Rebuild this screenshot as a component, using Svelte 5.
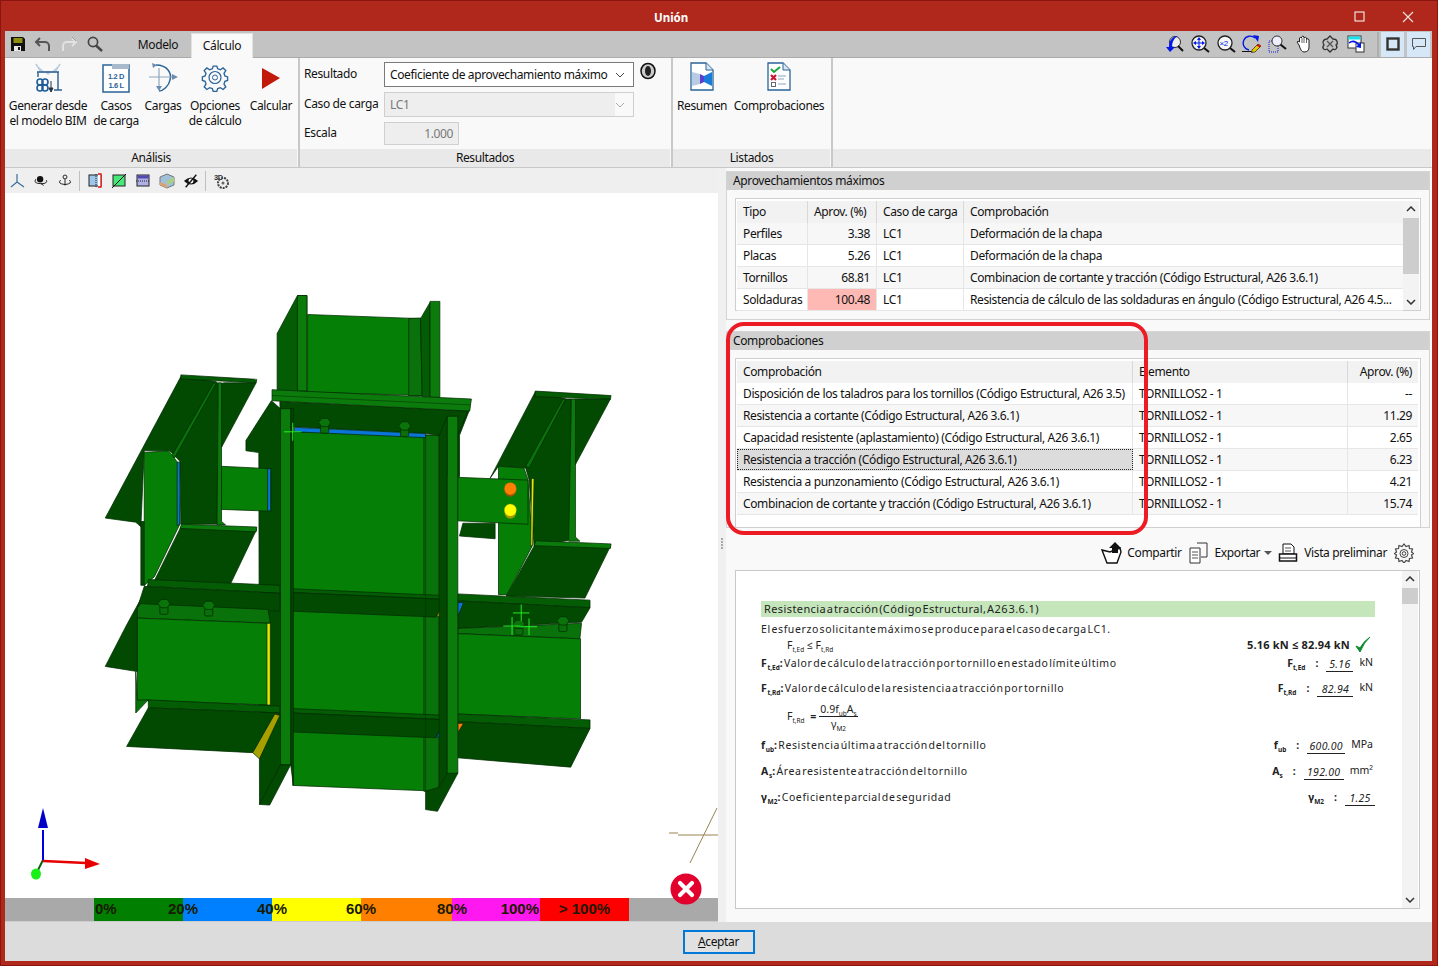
<script>
  const maxRows = [
    ['Perfiles', '3.38', 'LC1', 'Deformación de la chapa'],
    ['Placas', '5.26', 'LC1', 'Deformación de la chapa'],
    ['Tornillos', '68.81', 'LC1', 'Combinacion de cortante y tracción (Código Estructural, A26 3.6.1)'],
    ['Soldaduras', '100.48', 'LC1', 'Resistencia de cálculo de las soldaduras en ángulo (Código Estructural, A26 4.5...']
  ]
  const checkRows = [
    ['Disposición de los taladros para los tornillos (Código Estructural, A26 3.5)', '--'],
    ['Resistencia a cortante (Código Estructural, A26 3.6.1)', '11.29'],
    ['Capacidad resistente (aplastamiento) (Código Estructural, A26 3.6.1)', '2.65'],
    ['Resistencia a tracción (Código Estructural, A26 3.6.1)', '6.23'],
    ['Resistencia a punzonamiento (Código Estructural, A26 3.6.1)', '4.21'],
    ['Combinacion de cortante y tracción (Código Estructural, A26 3.6.1)', '15.74']
  ]
  const legend = [
    { c: '#007f00', w: 89, t: '0%', left: true, end: '20%' },
    { c: '#0080ff', w: 89, end: '40%' },
    { c: '#ffff00', w: 89, end: '60%' },
    { c: '#ff8000', w: 91, end: '80%' },
    { c: '#ff18f0', w: 88, t: '100%', right: true },
    { c: '#ff0000', w: 89, t: '> 100%', center: true }
  ]

  const G = '#067f06', D = '#024a02', M = '#0a720a', L = '#0b7c0b', S = '#045c04'
  // piezas del modelo, de atrás hacia delante (coordenadas del recorte)
  const faces = [
    // pilar superior
    [S, '552,155 612,45 640,45 640,325 552,325'],
    [L, '612,45 640,45 640,322 612,322'],
    [G, '642,100 975,112 985,335 642,325'],
    [M, '940,112 975,110 980,335 940,335'],
    [S, '975,112 1003,65 1003,338 980,338'],
    [L, '1003,62 1032,62 1032,340 1003,340'],
    // viga superior izquierda
    [D, '268,280 372,295 378,300 375,708 268,708 265,525 235,495 160,495 150,715 135,702 45,690'],
    [D, '150,700 162,700 162,885 150,885'],
    [S, '268,275 492,288 490,298 268,287'],
    [D, '395,298 490,298 388,485 388,300'],
    [L, '378,298 388,298 388,700 400,710 375,710'],
    [M, '240,512 365,298 373,298 250,515'],
    [G, '160,500 232,495 258,528 265,708 190,860 160,885'],
    ['#0a74d8', '257,528 265,528 265,708 257,712'],
    [D, '270,712 492,722 415,880 188,875'],
    [L, '270,708 492,716 490,730 266,720'],
    // viga superior derecha
    [D, '1313,325 1405,345 1285,545 1205,540 1180,575'],
    [D, '1285,545 1405,345 1420,345 1420,745 1410,755 1310,770 1295,578'],
    [M, '1285,540 1395,345 1403,345 1295,545'],
    [S, '1313,322 1537,335 1535,346 1313,338'],
    [D, '1440,345 1535,345 1432,535 1432,345'],
    [D, '1100,705 1195,705 1195,750 1090,742'],
    [L, '1420,345 1432,345 1432,745 1445,757 1412,757'],
    [G, '1205,540 1280,545 1292,578 1305,770 1230,912 1205,912'],
    ['#e6e600', '1302,575 1310,575 1306,768 1300,772'],
    [D, '1315,762 1535,772 1460,922 1228,916'],
    [L, '1315,756 1537,765 1535,778 1310,770'],
    // fondo del pilar
    [D, '460,495 460,465 535,350 570,380 570,1400 500,1520 498,500'],
    [D, '1040,385 1120,375 1090,450 1090,570 1040,570'],
    // vigas inferiores
    [D, '172,885 108,1000 45,1120 140,1135 140,950'],
    [S, '172,868 560,885 560,908 170,888'],
    [D, '160,888 560,908 560,960 140,950'],
    [M, '140,950 150,938 525,955 532,995 140,980'],
    [G, '140,980 530,995 530,1232 140,1218'],
    ['#e6e600', '522,995 532,995 532,1232 522,1232'],
    [M, '135,1135 140,1218 172,1217 135,1255'],
    [S, '172,1217 560,1235 560,1255 172,1240'],
    [D, '172,1240 108,1352 480,1370 560,1255'],
    ['#a8a000', '480,1370 500,1388 560,1262 545,1258'],
    [S, '1085,910 1475,928 1475,950 1085,930'],
    [D, '1085,930 1475,950 1450,992 1085,1010'],
    [M, '1085,1010 1450,995 1445,1040 1085,1025'],
    [G, '1085,1025 1447,1040 1447,1272 1085,1258'],
    [S, '1085,1258 1475,1275 1475,1300 1085,1280'],
    [D, '1085,1280 1475,1300 1418,1412 1085,1385'],
    ['#0a74d8', '1085,935 1102,935 1085,975'],
    ['#ff8000', '1085,1285 1102,1285 1085,1312'],
    // alma del pilar
    [G, '598,440 1030,450 1030,1482 598,1465'],
    [M, '985,450 1030,450 1030,1482 985,1482'],
    [D, '560,352 1115,380 1085,450 1030,450 990,445 600,425 562,420'],
    ['#0a74d8', '603,427 990,445 990,457 603,440'],
    [S, '595,895 1052,915 1052,926 595,906'],
    [D, '595,906 1050,926 1020,977 595,960'],
    ['#a8a000', '1022,976 1035,976 1052,928 1045,926'],
    [S, '595,1242 1052,1262 1052,1274 595,1255'],
    [D, '595,1255 1050,1275 1020,1327 595,1310'],
    ['#0a5cb8', '1022,1325 1035,1325 1052,1278 1045,1276'],
    // alas del pilar
    [D, '592,373 600,373 600,1465 592,1405'],
    [D, '1030,450 1054,395 1054,1430 1030,1470'],
    [L, '562,373 592,373 592,1405 562,1405'],
    [L, '1054,395 1085,395 1085,1430 1054,1430'],
    [D, '500,1520 530,1522 592,1405 562,1405'],
    [D, '990,1535 1025,1540 1085,1430 1054,1430 1030,1470 990,1482'],
    // placa superior
    [L, '537,318 1125,345 1120,380 537,350'],
    // chapas de unión
    [G, '388,540 533,547 533,670 388,665'],
    ['#0a74d8', '524,547 533,547 533,670 524,668'],
    [G, '1085,572 1292,580 1292,708 1085,698']
  ]
  const bolts = [[692, 415], [928, 425], [218, 940], [350, 945], [1265, 1000], [1395, 990]]
  const crosses = [[598, 440, 26], [1272, 965, 24], [1245, 1003, 26], [1295, 1005, 24]]
</script>

<div class="window">
  <div class="titlebar">
    <span class="title">Unión</span>
    <svg class="winbtn max" width="12" height="12"><rect x="1" y="1" width="9" height="9" fill="none" stroke="#fff" /></svg>
    <svg class="winbtn close" width="12" height="12"><path d="M1 1 L11 11 M11 1 L1 11" stroke="#f6e0dc" stroke-width="1.2" /></svg>
  </div>

  <div class="tabbar">
    <div class="quick">
      <svg width="16" height="16" viewBox="0 0 16 16"><path d="M1 1h12l2 2v12H1z" fill="#111" /><rect x="3.5" y="2" width="9" height="5" fill="#8e8e10" /><rect x="4" y="10" width="7" height="5" fill="#e8e8e8" /><rect x="8" y="11" width="2" height="3" fill="#111" /></svg>
      <svg width="18" height="16" viewBox="0 0 18 16"><path d="M6 2 L2 6 L6 10 M2 6 H11 A4 4 0 0 1 15 10 V15" fill="none" stroke="#555" stroke-width="2" /></svg>
      <svg width="18" height="16" viewBox="0 0 18 16"><path d="M12 2 L16 6 L12 10 M16 6 H7 A4 4 0 0 0 3 10 V15" fill="none" stroke="#e2e2e2" stroke-width="2" /><path d="M12 1 L16 5" stroke="#999" /></svg>
      <svg width="18" height="16" viewBox="0 0 18 16"><circle cx="7" cy="6" r="4.6" fill="none" stroke="#444" stroke-width="1.7" /><path d="M10 9.5 L16 15" stroke="#444" stroke-width="2.4" /></svg>
    </div>
    <span class="tab">Modelo</span>
    <span class="tab active">Cálculo</span>
    <div class="viewtools">
      <svg width="20" height="18" viewBox="0 0 20 18"><circle cx="11" cy="7" r="5.5" fill="#eee" stroke="#333" /><path d="M14 11 L19 16" stroke="#111" stroke-width="2" /><path d="M6 17 L2 12 H5 C5 5 9 1 14 1 C10 3 8 7 8 12 H11Z" fill="#0018e8" /></svg>
      <svg width="20" height="18" viewBox="0 0 20 18"><circle cx="9" cy="8" r="7" fill="#f2f2f2" stroke="#222" stroke-width="1.3" /><path d="M14 13 L19 17" stroke="#111" stroke-width="2" /><path d="M9 2 L11 5 H7Z M9 14 L11 11 H7Z M3 8 L6 6 V10Z M15 8 L12 6 V10Z" fill="#0018e8" /><path d="M5 8H13M9 4V12" stroke="#0018e8" /></svg>
      <svg width="20" height="18" viewBox="0 0 20 18"><circle cx="9" cy="8" r="7" fill="#f6f6f6" stroke="#222" stroke-width="1.3" /><path d="M14 13 L19 17" stroke="#111" stroke-width="2" /><text x="3.5" y="11" class="x2">×2</text></svg>
      <svg width="20" height="18" viewBox="0 0 20 18"><path d="M13 3 A7 7 0 1 0 7 15" fill="none" stroke="#0018e8" stroke-width="1.4" /><path d="M11 0 L17 1 L16 7Z" fill="#0018e8" /><path d="M0 16.5 H10" stroke="#111" /><path d="M10 15 L16 9 L19 11 L13 17 L9.5 17.5Z" fill="#e6c800" stroke="#222" stroke-width=".7" /><path d="M16 9 L19 11 L17.5 12.5 L14.6 10.4Z" fill="#d01010" /></svg>
      <svg width="20" height="18" viewBox="0 0 20 18"><rect x="1" y="6" width="9" height="11" fill="none" stroke="#1a1ae0" stroke-dasharray="1 1" /><circle cx="9" cy="6" r="5" fill="#eef" stroke="#333" /><path d="M12.5 9.5 L18 14" stroke="#111" stroke-width="2" /></svg>
      <svg width="20" height="18" viewBox="-1 0 20 18"><path d="M4 10 L2 7 Q3 5.5 4.5 7 V3 Q6 1.5 6.5 3 V2 Q8 0 9 2 V2.5 Q11 1.5 11.5 3 V4 Q13.5 3 14 5 V12 Q14 17 9 17 Q6 17 4 10Z" fill="#fff" stroke="#222" /><path d="M7 3V8M9 2V8M11.5 4V8" stroke="#222" stroke-width=".7" /></svg>
      <svg width="20" height="18" viewBox="-1 0 20 18"><path d="M9 1 L12 4 C17 4 17 9 15 10 C17 12 15 16 12 14 L9 17 L6 14 C2 16 1 12 3 10 C1 8 2 4 6 4Z" fill="none" stroke="#333" stroke-width="1.3" /><path d="M6 6 L12 12 M12 6 L6 12" stroke="#555" stroke-width="1.3" /></svg>
      <svg width="20" height="18" viewBox="-1 0 20 18"><rect x="1" y="1" width="13" height="12" fill="#fff" stroke="#333" /><rect x="1.5" y="1.5" width="12" height="3" fill="#16e4ea" /><rect x="9" y="8" width="8" height="9" fill="#fff" stroke="#333" /><path d="M2 8 Q7 4 12 10" fill="none" stroke="#0018e8" stroke-width="1.6" /><path d="M14 7 L14 13 L9 12Z" fill="#0018e8" /></svg>
      <i class="vsep"></i>
      <span class="toggle"><svg width="14" height="14"><rect x="1.5" y="1.5" width="11" height="11" fill="none" stroke="#333" stroke-width="2.4" /></svg></span>
      <span class="toggle"><svg width="16" height="14"><path d="M1.5 1.5 H14.5 V9.5 H5 L2.5 12.5 V9.5 H1.5Z" fill="none" stroke="#555" /></svg></span>
    </div>
  </div>

  <div class="ribbon">
    <section class="group analysis">
      <div class="gbody">
        <div class="rbtn" style="width:82px">
          <svg width="32" height="32" viewBox="0 0 32 32"><path d="M4 2 L9 10 H23 L28 2" fill="none" stroke="#b9c9de" stroke-width="1.5" /><path d="M7 5 L16 13 L25 5 L25 10 H7Z" fill="#bccce2" /><path d="M5 10 H27 M26 10 V28 M22 28 H30 M6 10 V15" stroke="#2c5f92" stroke-width="1.4" fill="none" /><circle cx="8" cy="20" r="3" fill="none" stroke="#1f5c9b" stroke-width="1.6" /><circle cx="13" cy="20" r="3" fill="none" stroke="#1f5c9b" stroke-width="1.6" /><circle cx="8" cy="26" r="3" fill="none" stroke="#1f5c9b" stroke-width="1.6" /><circle cx="13" cy="26" r="3" fill="none" stroke="#1f5c9b" stroke-width="1.6" /><path d="M19 19 V28 M17 26 L19 30 L21 26Z" stroke="#234" fill="#234" /></svg>
          <span>Generar desde<br />el modelo BIM</span>
        </div>
        <div class="rbtn" style="width:54px">
          <svg width="30" height="32" viewBox="0 0 30 32"><path d="M2 3 H28 V30 H2Z" fill="#fff" stroke="#2a6499" stroke-width="1.5" /><path d="M11 2 H28 V7 H11Z" fill="#a9b9cc" /><text x="15" y="17" class="lc">1.2 D</text><text x="15" y="26" class="lc">1.6 L</text></svg>
          <span>Casos<br />de carga</span>
        </div>
        <div class="rbtn" style="width:40px">
          <svg width="30" height="32" viewBox="0 0 30 32"><path d="M8 3 C20 3 24 12 22 18 C21 24 15 29 11 29" fill="none" stroke="#2a6499" stroke-width="1.5" /><path d="M1 15 H24 M11 6 V26" stroke="#8fa5bf" stroke-width="1.2" /><path d="M24 12 L30 15 L24 18Z M8 24 L11 29 L14 24Z M4 1 L9 3 L5 6Z" fill="#6b8cb0" /></svg>
          <span>Cargas</span>
        </div>
        <div class="rbtn" style="width:64px">
          <svg width="30" height="32" viewBox="0 0 30 32"><path d="M13 4 h4 l1 3 3 1 3-2 3 3-2 3 1 3 3 1 v4 l-3 1-1 3 2 3-3 3-3-2-3 1-1 3 h-4 l-1-3-3-1-3 2-3-3 2-3-1-3-3-1 v-4 l3-1 1-3-2-3 3-3 3 2 3-1z" transform="translate(1.5,0.5) scale(.9)" fill="none" stroke="#2a6499" stroke-width="1.5" /><circle cx="15" cy="15.5" r="6" fill="none" stroke="#2a6499" stroke-width="1.2" /><circle cx="15" cy="15.5" r="2.5" fill="none" stroke="#2a6499" /></svg>
          <span>Opciones<br />de cálculo</span>
        </div>
        <div class="rbtn" style="width:48px">
          <svg width="20" height="32" viewBox="0 0 20 32"><path d="M1 6 L19 16 L1 27Z" fill="#c1190a" /></svg>
          <span>Calcular</span>
        </div>
      </div>
      <div class="glabel">Análisis</div>
    </section>

    <section class="group results">
      <div class="gbody form">
        <label class="f1">Resultado</label>
        <div class="combo">Coeficiente de aprovechamiento máximo<svg width="10" height="6"><path d="M1 1 L5 5 L9 1" fill="none" stroke="#444" /></svg></div>
        <svg class="info" width="16" height="18" viewBox="0 0 16 18"><ellipse cx="8" cy="9" rx="7" ry="7.6" fill="#ccc" stroke="#111" stroke-width="1.5" /><ellipse cx="8" cy="9" rx="3" ry="5" fill="#222" /></svg>
        <label class="f2">Caso de carga</label>
        <div class="combo off"><b>LC1</b><svg width="10" height="6"><path d="M1 1 L5 5 L9 1" fill="none" stroke="#aaa" /></svg></div>
        <label class="f3">Escala</label>
        <div class="scale">1.000</div>
      </div>
      <div class="glabel">Resultados</div>
    </section>

    <section class="group lists">
      <div class="gbody">
        <div class="rbtn" style="width:58px">
          <svg width="24" height="30" viewBox="0 0 24 30"><path d="M1 1 H16 L23 8 V28 H1Z" fill="#fff" stroke="#2a6499" stroke-width="1.3" /><path d="M16 1 V8 H23" fill="#dbe6f2" stroke="#2a6499" /><path d="M2 10 L10 12 V22 L2 24Z" fill="#b9cbe2" /><path d="M10 12 L14 14 V20 L10 22Z" fill="#5a3fd0" /><path d="M14 14 L22 10 V24 L14 20Z" fill="#1a7cd8" /></svg>
          <span>Resumen</span>
        </div>
        <div class="rbtn" style="width:96px">
          <svg width="24" height="30" viewBox="0 0 24 30"><path d="M1 1 H16 L23 8 V28 H1Z" fill="#fff" stroke="#2a6499" stroke-width="1.3" /><path d="M16 1 V8 H23" fill="#dbe6f2" stroke="#2a6499" /><path d="M4 7 L7 10 L13 5" fill="none" stroke="#18a838" stroke-width="2" /><path d="M4 13 L9 18 M9 13 L4 18" stroke="#c81830" stroke-width="2.2" /><rect x="4.5" y="20.5" width="4" height="4" fill="none" stroke="#667" /><path d="M11 14H19M11 17H17M11 22H19" stroke="#8fa5bf" /></svg>
          <span>Comprobaciones</span>
        </div>
      </div>
      <div class="glabel">Listados</div>
    </section>

    <section class="group rest">
      <div class="gbody"></div>
      <div class="glabel"></div>
    </section>
  </div>

  <div class="main">
    <div class="left">
      <div class="viewbar">
        <svg width="16" height="16" viewBox="0 0 16 16"><path d="M8 1 V9 L2 14 M8 9 L15 14" fill="none" stroke="#3c6c9a" stroke-width="1.2" /></svg>
        <svg width="16" height="16" viewBox="0 0 18 16"><circle cx="8" cy="6" r="3.6" fill="#111" /><path d="M3 6 Q0 11 9 11 Q17 11 15 7" fill="none" stroke="#111" /><path d="M9 11 L12 13" stroke="#111" /></svg>
        <svg width="16" height="16" viewBox="0 0 18 16"><circle cx="9" cy="3.5" r="2.2" fill="none" stroke="#111" /><path d="M9 6 V13 M4 7 Q0 11 9 12 Q18 11 14 7" fill="none" stroke="#111" /></svg>
        <i class="vsep2"></i>
        <svg width="16" height="16" viewBox="0 0 16 16"><rect x="2" y="2" width="12" height="11" fill="#9fc5e8" stroke="#222" /><path d="M11 1 H14 V14 H11" fill="#fff" stroke="#e01010" stroke-width="1.3" /><path d="M9 1 V15" stroke="#222" stroke-dasharray="1 1" /></svg>
        <svg width="16" height="16" viewBox="0 0 16 16"><rect x="2" y="2" width="12" height="11" fill="#48e878" stroke="#222" /><path d="M1 15 L15 1" stroke="#111" /></svg>
        <svg width="16" height="16" viewBox="0 0 16 16"><rect x="2" y="2" width="12" height="11" fill="#b0b0e8" stroke="#222" /><rect x="2.5" y="2.5" width="11" height="3" fill="#5548b0" /><path d="M1 8 H15" stroke="#222" stroke-dasharray="1 1" /></svg>
        <svg width="16" height="16" viewBox="0 0 16 16"><path d="M8 1 L15 4 V12 L8 15 L1 12 V4Z" fill="#9fc0d8" stroke="#777" /><path d="M8 8 L15 4 V9 L8 12Z" fill="#a8d080" /><path d="M1 9 L8 12 V15 L1 12Z" fill="#e0a070" /></svg>
        <svg width="16" height="16" viewBox="0 0 18 16"><path d="M1 8 Q9 0 17 8 Q9 16 1 8Z" fill="#111" /><circle cx="9" cy="8" r="2.8" fill="#fff" /><path d="M3 15 L15 1" stroke="#111" stroke-width="1.5" /></svg>
        <i class="vsep2"></i>
        <svg width="18" height="18" viewBox="0 0 18 18"><text x="1" y="8" class="td">3D</text><circle cx="10" cy="11" r="5" fill="none" stroke="#444" stroke-width="2" stroke-dasharray="2 1" /><circle cx="10" cy="11" r="1.5" fill="#666" /></svg>
      </div>

      <svg class="scene" viewBox="5 193 713 705" preserveAspectRatio="none">
        <g transform="translate(90,280) scale(0.339,0.345)" stroke="#012c01" stroke-width="2.2" stroke-linejoin="round">
          {#each faces as [fill, points]}
            <polygon {points} {fill} />
          {/each}
          <path d="M537 335 L1122 362 M990 450 V1482 M592 373 V1405" fill="none" stroke="#013001" stroke-width="1.6" />
          {#each bolts as [x, y]}
            <rect x={x - 12} y={y + 5} width="24" height="24" rx="4" fill="#0a6e0a" />
            <polygon points="{x - 18},{y - 2} {x - 8},{y - 14} {x + 10},{y - 14} {x + 18},{y - 2} {x + 10},{y + 10} {x - 8},{y + 10}" fill="#0a740a" />
          {/each}
          <circle cx="1240" cy="611" r="17" fill="#9c5208" stroke="none" />
          <circle cx="1240" cy="605" r="18" fill="#ff8000" stroke="#8a5a00" stroke-width="1" />
          <circle cx="1240" cy="675" r="17" fill="#a09800" stroke="none" />
          <circle cx="1240" cy="667" r="18" fill="#ffff00" stroke="#8a8a00" stroke-width="1" />
          {#each crosses as [x, y, r]}
            <path d="M{x - r} {y} H{x + r} M{x} {y - r} V{y + r}" stroke="#29ff29" stroke-width="2.6" />
          {/each}
        </g>

        <!-- ejes -->
        <path d="M36 874 L43 860" stroke="#0b5f0b" stroke-width="2" />
        <ellipse cx="36" cy="874" rx="5" ry="5.5" fill="#18f018" />
        <path d="M43 860 V830" stroke="#0000e0" stroke-width="2" />
        <polygon points="43,808 38,828 48,828" fill="#0000c8" />
        <path d="M43 861 L86 863" stroke="#e80000" stroke-width="2.4" />
        <polygon points="100,864 85,858 85,869" fill="#e80000" />

        <path d="M669 833 L678 833 M678 835 H718 M717 808 L690 863" fill="none" stroke="#9a8450" />

        <circle cx="686" cy="889" r="15.5" fill="#e2002c" />
        <path d="M680 883 L692 895 M692 883 L680 895" stroke="#fff" stroke-width="4.2" stroke-linecap="round" />
      </svg>

      <div class="legend">
        {#each legend as seg}
          <div class="seg" style="width:{seg.w}px;background:{seg.c}">
            {#if seg.t}<span class:lleft={seg.left} class:lright={seg.right} class:lcenter={seg.center}>{seg.t}</span>{/if}
            {#if seg.end}<span class="lend">{seg.end}</span>{/if}
          </div>
        {/each}
      </div>
    </div>

    <div class="split"><i></i><i></i><i></i><i></i></div>

    <div class="right">
      <div class="panel first">
        <div class="phead">Aprovechamientos máximos</div>
        <div class="pbody">
          <div class="tbl tbl-max">
            <div class="tmain">
              <div class="row hdr">
                <span class="c1">Tipo</span><span class="c2">Aprov. (%)</span><span class="c3">Caso de carga</span><span class="c4">Comprobación</span>
              </div>
              {#each maxRows as r, i}
                <div class="row" class:alt={i % 2 === 0}>
                  <span class="c1">{r[0]}</span>
                  <span class="c2 num" class:hot={r[1] === '100.48'}>{r[1]}</span>
                  <span class="c3">{r[2]}</span>
                  <span class="c4">{r[3]}</span>
                </div>
              {/each}
            </div>
            <div class="vscroll">
              <svg width="10" height="6"><path d="M1 5 L5 1 L9 5" fill="none" stroke="#333" stroke-width="1.5" /></svg>
              <i class="thumb big"></i>
              <svg class="down" width="10" height="6"><path d="M1 1 L5 5 L9 1" fill="none" stroke="#333" stroke-width="1.5" /></svg>
            </div>
          </div>
        </div>
      </div>

      <div class="panel second">
        <div class="phead">Comprobaciones</div>
        <div class="pbody">
          <div class="tbl tbl-check">
            <div class="row hdr">
              <span class="k1">Comprobación</span><span class="k2">Elemento</span><span class="k3">Aprov. (%)</span>
            </div>
            {#each checkRows as r, i}
              <div class="row" class:alt={i % 2 === 1}>
                <span class="k1" class:sel={i === 3}>{r[0]}</span>
                <span class="k2">TORNILLOS2 - 1</span>
                <span class="k3 num">{r[1]}</span>
              </div>
            {/each}
          </div>
        </div>
      </div>

      <div class="reportbar">
        <svg width="24" height="22" viewBox="0 0 24 22"><path d="M2 8 L10 10 L20 6 L21 10 L17 21 H7Z" fill="#fff" stroke="#111" stroke-width="1.4" /><path d="M15 0 L21 6 H18 V11 H12 V6 H9Z" fill="#111" /></svg>
        <span class="share">Compartir</span>
        <svg class="gap" width="20" height="22" viewBox="0 0 20 22"><path d="M1 6 H11 V21 H1Z" fill="#fff" stroke="#333" /><path d="M8 1 H18 V15 H12" fill="none" stroke="#333" /><path d="M3 10H9M3 13H9M3 16H9" stroke="#555" /></svg>
        <span class="pad">Exportar</span>
        <svg class="caret" width="8" height="4"><path d="M0 0 H8 L4 4Z" fill="#555" /></svg>
        <svg class="gap2" width="20" height="20" viewBox="0 0 20 20"><path d="M5 1 H13 L16 4 V11 H5Z" fill="#fff" stroke="#111" /><rect x="1.5" y="11" width="17" height="7" fill="#fff" stroke="#111" stroke-width="1.5" /><path d="M2 15 H18" stroke="#111" /><path d="M7 5H13M7 8H13" stroke="#555" /></svg>
        <span class="pad">Vista preliminar</span>
        <svg class="gap3" width="20" height="20" viewBox="0 0 20 20"><path d="M10 1 l2 2.5 3-1 .5 3 3 .5-1 3 2 1.5-2 1.5 1 3-3 .5-.5 3-3-1-2 2.5-2-2.5-3 1-.5-3-3-.5 1-3-2-1.5 2-1.5-1-3 3-.5 .5-3 3 1z" fill="none" stroke="#444" stroke-width="1.2" /><circle cx="10" cy="10.5" r="4" fill="none" stroke="#444" /><circle cx="10" cy="10.5" r="1.8" fill="none" stroke="#444" /></svg>
      </div>

      <div class="report">
        <div class="sheet">
          <div class="rtitle">Resistencia a tracción (Código Estructural, A26 3.6.1)</div>
          <div class="rline l-a">El esfuerzo solicitante máximo se produce para el caso de carga LC1.</div>
          <div class="rline l-b">
            <span class="fml">F<sub>t,Ed</sub> ≤ F<sub>t,Rd</sub></span>
            <span class="verdict">5.16 kN ≤ 82.94 kN
              <svg width="16" height="18" viewBox="0 0 16 18"><path d="M1 10 L5 16 Q9 6 15 1 Q8 6 5 12Z" fill="#0c8a2c" stroke="#0c8a2c" /></svg>
            </span>
          </div>
          <div class="rline l-c">
            <span><b>F<sub>t,Ed</sub>:</b> Valor de cálculo de la tracción por tornillo en estado límite último</span>
            <span class="val"><b>F<sub>t,Ed</sub></b><b class="dot">:</b><em style="width:27px">5.16</em><u>kN</u></span>
          </div>
          <div class="rline l-d">
            <span><b>F<sub>t,Rd</sub>:</b> Valor de cálculo de la resistencia a tracción por tornillo</span>
            <span class="val"><b>F<sub>t,Rd</sub></b><b class="dot">:</b><em style="width:36px">82.94</em><u>kN</u></span>
          </div>
          <div class="rline l-e">
            <span class="fml">F<sub>t,Rd</sub> <b class="eq">=</b></span>
            <span class="frac"><span class="num1">0.9f<sub>ub</sub>A<sub>s</sub></span><span class="den">γ<sub>M2</sub></span></span>
          </div>
          <div class="rline l-f">
            <span><b>f<sub>ub</sub>:</b> Resistencia última a tracción del tornillo</span>
            <span class="val"><b>f<sub>ub</sub></b><b class="dot">:</b><em style="width:38px">600.00</em><u>MPa</u></span>
          </div>
          <div class="rline l-g">
            <span><b>A<sub>s</sub>:</b> Área resistente a tracción del tornillo</span>
            <span class="val"><b>A<sub>s</sub></b><b class="dot">:</b><em style="width:40px">192.00</em><u>mm²</u></span>
          </div>
          <div class="rline l-h">
            <span><b>γ<sub>M2</sub>:</b> Coeficiente parcial de seguridad</span>
            <span class="val"><b>γ<sub>M2</sub></b><b class="dot">:</b><em style="width:30px">1.25</em></span>
          </div>
        </div>
        <div class="vscroll rs">
          <svg width="10" height="6"><path d="M1 5 L5 1 L9 5" fill="none" stroke="#333" stroke-width="1.5" /></svg>
          <i class="thumb"></i>
          <svg class="down" width="10" height="6"><path d="M1 1 L5 5 L9 1" fill="none" stroke="#333" stroke-width="1.5" /></svg>
        </div>
      </div>
    </div>

    <svg class="marker" width="424" height="216"><rect x="3" y="3" width="418" height="209" rx="16" fill="none" stroke="#ed1c24" stroke-width="4" /></svg>
  </div>

  <div class="footer"><button><u>A</u>ceptar</button></div>
</div>

<style>
  :global(body) {
    margin: 0;
    font-family: "Noto Sans", "Open Sans", sans-serif;
  }

  .window {
    position: relative;
    box-sizing: border-box;
    width: 1438px;
    height: 966px;
    padding: 0 5px 4px 4px;
    display: flex;
    flex-direction: column;
    overflow: hidden;
    background: #b0281c;
    border: 1px solid #8a1510;
    font-size: 12px;
    letter-spacing: -0.37px;
    color: #111;
  }

  svg {
    flex: none;
    display: block;
  }

  .titlebar {
    height: 30px;
    flex: none;
    box-sizing: border-box;
    padding-top: 2px;
    display: flex;
    align-items: center;
    color: #fff;
  }

  .title {
    margin-left: 649px;
    font-weight: 700;
    font-size: 11.5px;
    letter-spacing: 0;
  }

  .winbtn.max {
    margin-left: 666px;
  }

  .winbtn.close {
    margin-left: 36px;
  }

  .tabbar {
    height: 27px;
    flex: none;
    box-sizing: border-box;
    display: flex;
    align-items: stretch;
    background: #c3c3c3;
    border-bottom: 1px solid #ababab;
  }

  .quick {
    display: flex;
    align-items: center;
    gap: 8px;
    padding-left: 5px;
    width: 120px;
    box-sizing: border-box;
  }

  .tab {
    width: 66px;
    line-height: 26px;
    text-align: center;
    margin-top: 1px;
  }

  .tab.active {
    width: 62px;
    margin-top: 2px;
    margin-left: 0;
    margin-bottom: -1px;
    line-height: 24px;
    background: #f9f9f9;
    border: 1px solid #e2e2e2;
    border-bottom: 0;
    box-sizing: border-box;
    position: relative;
  }

  .viewtools {
    margin-left: auto;
    display: flex;
    align-items: center;
    gap: 6px;
    padding-right: 2px;
  }

  .x2 {
    font: 8px "Liberation Sans", sans-serif;
    fill: #0018e8;
  }

  .vsep {
    width: 2px;
    height: 25px;
    margin-left: 5px;
    background: #adadad;
  }

  .toggle {
    width: 23px;
    height: 25px;
    margin-left: -4px;
    display: flex;
    align-items: center;
    justify-content: center;
    background: #d6e8f7;
  }

  .toggle + .toggle {
    margin-left: -3px;
  }

  .ribbon {
    height: 110px;
    flex: none;
    box-sizing: border-box;
    display: flex;
    background: #f9f9f9;
    border-bottom: 1px solid #c8c8c8;
  }

  .group {
    display: flex;
    flex-direction: column;
    box-sizing: border-box;
    border-right: 2px solid #c8c8c8;
    padding-right: 1px;
  }

  .analysis {
    width: 295px;
  }

  .results {
    width: 373px;
  }

  .lists {
    width: 160px;
  }

  .rest {
    flex: 1;
    border-right: 0;
  }

  .gbody {
    flex: 1;
    display: flex;
    align-items: flex-start;
    padding-top: 4px;
  }

  .glabel {
    height: 18px;
    line-height: 18px;
    text-align: center;
    background: #e9e9e9;
  }

  .rbtn {
    flex: none;
    display: flex;
    flex-direction: column;
    align-items: center;
    text-align: center;
    line-height: 15px;
  }

  .rbtn span {
    margin-top: 4px;
  }

  .analysis .gbody {
    padding-left: 2px;
  }

  .lists .gbody {
    padding-left: 0;
  }

  .lists .rbtn span {
    margin-top: 6px;
  }

  .lc {
    font: 700 7.5px "Liberation Sans", sans-serif;
    fill: #2a6499;
    text-anchor: middle;
  }

  .td {
    font: 700 7.5px "Liberation Sans", sans-serif;
    fill: #333;
  }

  .form {
    display: grid;
    grid-template-columns: 80px 250px 24px;
    grid-template-rows: 25px 25px 23px;
    row-gap: 5px;
    padding-left: 4px;
    align-items: center;
    align-content: start;
  }

  .form label {
    grid-column: 1;
    margin-top: -2px;
  }

  .combo {
    box-sizing: border-box;
    height: 25px;
    padding: 0 8px 0 5px;
    display: flex;
    align-items: center;
    justify-content: space-between;
    background: #fff;
    border: 1px solid #7a7a7a;
  }

  .combo.off {
    background: #eee;
    border: 1px solid #cfcfcf;
    box-shadow: inset -18px 0 0 #f9f9f9;
    color: #777;
  }

  .combo.off b {
    font-weight: 400;
  }

  .info {
    margin: -8px 0 0 6px;
  }

  .scale {
    box-sizing: border-box;
    width: 75px;
    height: 23px;
    line-height: 21px;
    padding-right: 5px;
    text-align: right;
    color: #777;
    background: #eee;
    border: 1px solid #cfcfcf;
  }

  .main {
    position: relative;
    flex: 1;
    display: flex;
    min-height: 0;
    background: #f0f0f0;
  }

  .left {
    width: 713px;
    flex: none;
    display: flex;
    flex-direction: column;
  }

  .viewbar {
    height: 25px;
    flex: none;
    display: flex;
    align-items: center;
    gap: 8px;
    padding-left: 4px;
    background: #efefef;
  }

  .vsep2 {
    width: 1px;
    height: 20px;
    background: #c0c0c0;
    margin: 0 -1px 0 -2px;
  }

  .scene {
    position: relative;
    z-index: 1;
    width: 713px;
    height: 705px;
    overflow: visible;
    background: #fff;
  }

  .legend {
    height: 23px;
    flex: none;
    display: flex;
    padding-left: 89px;
    background: #a9a9a9;
    border-bottom: 1px solid #ccc;
  }

  .seg {
    position: relative;
    flex: none;
    font: 700 15px/22px "Liberation Sans", sans-serif;
    letter-spacing: 0;
    color: #1a1a00;
  }

  .seg span {
    position: absolute;
    top: 0;
  }

  .lleft {
    left: 1px;
  }

  .lright {
    right: 1px;
  }

  .lcenter {
    left: 0;
    right: 0;
    text-align: center;
  }

  .seg .lend {
    right: 0;
    transform: translateX(50%);
    z-index: 1;
  }

  .split {
    width: 8px;
    flex: none;
    display: flex;
    flex-direction: column;
    gap: 1px;
    padding-top: 370px;
    align-items: center;
    box-sizing: border-box;
  }

  .split i {
    width: 2px;
    height: 2px;
    background: #a8a8a8;
  }

  .right {
    flex: 1;
    display: flex;
    flex-direction: column;
    padding: 3px 2px 13px 0;
    min-width: 0;
    background: #f9f9f9;
  }

  .panel {
    flex: none;
    box-sizing: border-box;
    border: 1px solid #d4d4d4;
  }

  .panel.first {
    height: 149px;
    margin-bottom: 11px;
  }

  .panel.second {
    height: 197px;
  }

  .phead {
    height: 18px;
    line-height: 18px;
    padding-left: 6px;
    background: #d0d0d0;
  }

  .pbody {
    padding: 8px 8px 0;
  }

  .tbl {
    box-sizing: border-box;
    border: 1px solid #cfcfcf;
    background: #fff;
    padding: 2px 0 0 1px;
  }

  .tbl-max {
    display: flex;
    height: 113px;
    padding-right: 1px;
  }

  .tmain {
    flex: 1;
    min-width: 0;
  }

  .tbl-check {
    height: 170px;
    padding-right: 2px;
  }

  .row {
    display: flex;
    height: 22px;
    line-height: 21px;
    box-sizing: border-box;
    border-bottom: 1px solid #e6e6e6;
  }

  .row.alt {
    background: #f7f7f7;
  }

  .row.hdr {
    background: #f2f2f2;
    border-bottom: 0;
  }

  .row span {
    flex: none;
    box-sizing: border-box;
    padding: 0 6px;
    border-right: 1px solid #e6e6e6;
    white-space: nowrap;
    overflow: hidden;
  }

  .row.hdr span {
    border-right: 1px solid #d8d8d8;
  }

  .c1 {
    width: 71px;
  }

  .c2 {
    width: 69px;
  }

  .c3 {
    width: 87px;
  }

  .c4 {
    flex: 1 !important;
    min-width: 0;
    border-right: 0 !important;
  }

  .k1 {
    width: 396px;
  }

  .k2 {
    width: 215px;
  }

  .k3 {
    flex: 1 !important;
    border-right: 0 !important;
  }

  .row .num,
  .row.hdr .k3 {
    text-align: right;
  }

  .row .hot {
    background: #ffb9b4;
  }

  .row .sel {
    background: #dcdcdc;
    outline: 1px dotted #222;
    outline-offset: -1px;
  }

  .vscroll {
    position: relative;
    width: 16px;
    flex: none;
    display: flex;
    flex-direction: column;
    align-items: center;
    padding-top: 5px;
    box-sizing: border-box;
    background: #f3f3f3;
  }

  .thumb {
    width: 16px;
    height: 16px;
    margin-top: 6px;
    background: #cdcdcd;
  }

  .thumb.big {
    height: 56px;
  }

  .vscroll .down {
    margin-top: auto;
    margin-bottom: 5px;
  }

  .reportbar {
    height: 37px;
    flex: none;
    display: flex;
    align-items: center;
    justify-content: flex-end;
    padding: 12px 16px 0 0;
    box-sizing: border-box;
  }

  .reportbar .share {
    margin-left: 3px;
  }

  .reportbar .pad {
    margin-left: 6px;
  }

  .gap {
    margin-left: 7px;
  }

  .gap2 {
    margin-left: 6px;
  }

  .gap3 {
    margin-left: 7px;
  }

  .caret {
    margin-left: 4px;
  }

  .report {
    margin: 5px 10px 0 9px;
    flex: 1;
    min-height: 0;
    display: flex;
    box-sizing: border-box;
    border: 1px solid #c8c8c8;
    background: #fff;
  }

  .sheet {
    flex: 1;
    box-sizing: border-box;
    padding: 30px 26px 0 25px;
    font-size: 10.5px;
    letter-spacing: 0.6px;
    word-spacing: -2.6px;
    color: #222;
  }

  .rs {
    margin: 0 1px;
  }

  .rtitle {
    height: 16px;
    line-height: 16px;
    padding-left: 3px;
    background: #c5e6bb;
    font-size: 11px;
    letter-spacing: 0.4px;
  }

  .rline {
    display: flex;
    justify-content: space-between;
    align-items: center;
    height: 16px;
    line-height: 16px;
  }

  .rline b {
    font-weight: 700;
  }

  .rline sub {
    font-size: 6.5px;
    line-height: 0;
    letter-spacing: 0;
  }

  .l-a {
    margin-top: 4px;
  }

  .l-b {
    margin-top: 0;
    padding-right: 4px;
  }

  .l-c {
    margin-top: 2px;
  }

  .l-d,
  .l-h,
  .l-g {
    margin-top: 10px;
  }

  .l-d {
    margin-top: 9px;
  }

  .l-e {
    margin-top: 4px;
    height: 32px;
    justify-content: flex-start;
  }

  .l-f {
    margin-top: 5px;
  }

  .fml {
    margin-left: 26px;
    word-spacing: 0;
    letter-spacing: 0;
  }

  .eq {
    margin: 0 3px;
  }

  .verdict {
    font-weight: 700;
    font-size: 11px;
    letter-spacing: 0.2px;
    word-spacing: 0;
    display: flex;
    align-items: center;
    gap: 5px;
  }

  .frac {
    display: inline-flex;
    flex-direction: column;
    align-items: center;
    line-height: 14px;
    letter-spacing: 0;
  }

  .num1 {
    padding: 0 1px;
    border-bottom: 1px solid #222;
  }

  .val {
    display: flex;
    align-items: center;
    letter-spacing: 0;
  }

  .dot {
    margin: 0 8px 0 10px;
  }

  .val em {
    display: block;
    text-align: center;
    border-bottom: 1px solid #222;
    line-height: 14px;
    margin-top: 3px;
    padding: 0;
    letter-spacing: 0.3px;
  }

  .val u {
    display: block;
    padding: 0 2px 0 6px;
    box-sizing: border-box;
    text-decoration: none;
    margin-top: -2px;
  }

  .marker {
    position: absolute;
    left: 720px;
    top: 153px;
    z-index: 2;
  }

  .footer {
    height: 39px;
    flex: none;
    display: flex;
    align-items: center;
    justify-content: center;
    background: #dcdcdc;
  }

  .footer button {
    width: 72px;
    height: 24px;
    padding: 0;
    font: inherit;
    letter-spacing: inherit;
    color: #111;
    background: #e1e1e1;
    border: 2px solid #0078d7;
  }
</style>
